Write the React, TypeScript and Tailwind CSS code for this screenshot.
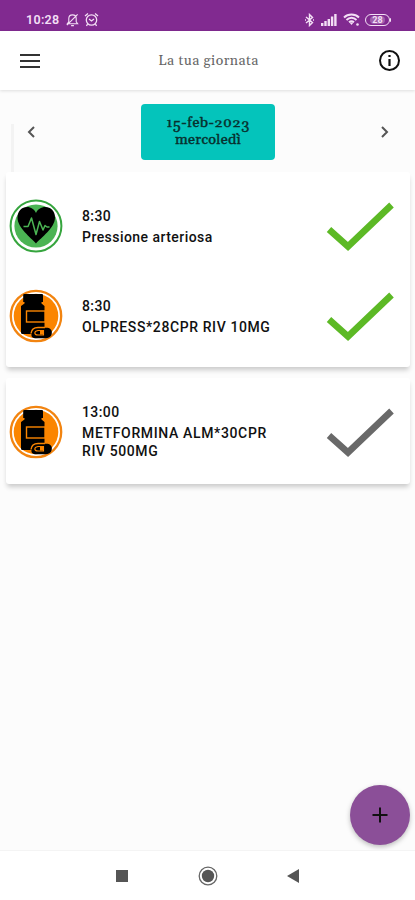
import React from "react";

function HeartIcon() {
  return (
    <svg width="54" height="54" viewBox="0 0 54 54" className="block shrink-0">
      <circle cx="27" cy="27" r="25.4" fill="#fff" stroke="#36a53e" strokeWidth="2" />
      <circle cx="27" cy="27" r="21.6" fill="#4bb453" />
      <path d="M27 44.5C22 38.500 8.500 29 8.500 18.500C8.500 12 13 8 18 8C22 8 25.500 10.500 27 14C28.500 10.500 32 8 36.500 8C41.500 8 46 12 46 18.500C46 29 32 38.500 27 44.500Z" fill="#000" />
      <path d="M14.500 27.500H19L22.500 19L27 35.500L30.500 22.500L34 31L36 26.500L38 28H40.500" fill="none" stroke="#4bb453" strokeWidth="1.5" strokeLinejoin="round" />
    </svg>
  );
}

function MedicineIcon() {
  return (
    <svg width="54" height="54" viewBox="0 0 54 54" className="block shrink-0">
      <circle cx="27" cy="27" r="25.200" fill="#fff" stroke="#f28410" strokeWidth="2.300" />
      <circle cx="27" cy="27" r="22.300" fill="#fb8500" />
      <path d="M15.500 5H33Q34 5 34 6V13H32.500V14.500L35.500 17V45H13.500Q12 45 12 43.500V17L15.500 14.500V13H14.200V6Q14.200 5 15.500 5Z" fill="#000" />
      <rect x="17.500" y="22" width="18.500" height="11" fill="#000" stroke="#fb8500" strokeWidth="1.400" />
      <path d="M22.500 45C23 40 26 38.700 29 38.700H38.500C42 39.200 43.500 42 42.700 45C42 48 39.500 49.300 36 49.300H27C24 49.300 22 48 22.500 45Z" fill="#000" />
      <path d="M22 44.500C22.500 40 25.500 38.500 29 38.500H36" fill="none" stroke="#fb8500" strokeWidth="1.500" />
      <path d="M34.500 41.500H29Q25.800 42 25.800 44Q25.800 46 29 46H34.500Z" fill="#000" stroke="#fb8500" strokeWidth="1.100" />
      <rect x="31" y="42" width="3.500" height="3.500" fill="#fb8500" />
    </svg>
  );
}

function Check({ color }: { color: string }) {
  return (
    <svg width="70" height="52" viewBox="0 0 70 52" className="ml-auto block shrink-0">
      <path d="M3 29.500L22 46.500L65.500 5" fill="none" stroke={color} strokeWidth="6.600" />
    </svg>
  );
}

function Entry({ icon, time, lines, color, className }: { icon: React.ReactNode; time: string; lines: { text: string; className: string }[]; color: string; className: string }) {
  return (
    <div className={`flex items-center pl-[3px] pr-[14px] ${className}`}>
      {icon}
      <div className="ml-[19px] whitespace-nowrap text-[14px] font-medium leading-[18px] text-[#111]">
        <div className="mb-[3px] tracking-[0.4px]">{time}</div>
        {lines.map((line) => (
          <div key={line.text} className={line.className}>{line.text}</div>
        ))}
      </div>
      <Check color={color} />
    </div>
  );
}

function StatusBar() {
  return (
    <div className="flex h-[31px] shrink-0 items-center bg-[#812a90] pt-[8px] text-[#f3dff5]">
      <span className="ml-[26px] w-[40px] text-[12.500px] font-semibold leading-4 tracking-[0.3px]">10:28</span>
      <svg width="13" height="14" viewBox="0 0 14 15" fill="none" stroke="currentColor" strokeWidth="1.200">
        <path d="M1.500 11.500H12.500L11 9.500V6C11 3.500 9.500 2 7 2S3 3.500 3 6V9.500ZM5.500 13.500H8.500M1 13L12.500 1.500" />
      </svg>
      <svg width="15" height="15" viewBox="0 0 15 15" fill="none" stroke="currentColor" strokeWidth="1.300" className="ml-[5px]">
        <circle cx="7.500" cy="8" r="5.200" />
        <path d="M1 4L4 1.500M14 4L11 1.500M5 7L7.500 9L10 7M3.500 12L2.500 14M11.500 12L12.500 14" />
      </svg>
      <svg width="11" height="14" viewBox="0 0 11 14" fill="none" stroke="currentColor" strokeWidth="1.400" className="ml-auto">
        <path d="M2 4L8.500 9.500L5.500 12.500V1.500L8.500 4.500L2 10M1 7H2M9 7H10" />
      </svg>
      <svg width="16" height="12" viewBox="0 0 16 12" fill="currentColor" className="ml-[6px]">
        <path d="M0 9H2.400V12H0ZM3.300 7H5.700V12H3.300ZM6.600 5H9V12H6.600ZM9.900 2.500H12.300V12H9.900ZM13.200 0H15.600V12H13.200Z" />
      </svg>
      <svg width="17" height="13" viewBox="0 0 17 13" fill="none" stroke="currentColor" strokeWidth="1.900" className="ml-[6px]">
        <path d="M1 4.500C5 .5 12 .5 16 4.500M3.500 7C6.500 4 10.500 4 13.500 7M6 9.300C7.500 8 9.500 8 11 9.300" />
        <path d="M6.500 9.500H10.500L8.500 12Z" fill="currentColor" stroke="none" />
        <circle cx="14.500" cy="11.500" r="1.300" fill="currentColor" stroke="none" />
      </svg>
      <div className="ml-[5px] flex h-[12px] w-[25px] items-center justify-center rounded-full border border-[#f3dff5]">
        <span className="rounded-sm bg-[#a060ac] px-[2px] text-[9px] font-bold leading-[8px]">28</span>
      </div>
      <div className="mr-[24px] h-[4px] w-[1px] rounded-r bg-[#f3dff5]" />
    </div>
  );
}

function OldStyleDigits({ value }: { value: string }) {
  return (
    <>
      {value.split("").map((char, index) => {
        if ("012".includes(char)) {
          return <span key={index} className="inline-block origin-[50%_78%] scale-y-[0.76] leading-[13px]">{char}</span>;
        }
        if ("3459".includes(char)) {
          return <span key={index} className="inline-block translate-y-[2px] leading-[13px]">{char}</span>;
        }
        return char;
      })}
    </>
  );
}

export default function App() {
  return (
    <div className="flex h-[900px] w-[415px] flex-col overflow-hidden bg-[#fcfcfc] font-['Roboto',sans-serif]">
      <StatusBar />
      <header className="z-10 flex h-[59px] shrink-0 items-center justify-between bg-white pl-5 pr-[14px] shadow-[0_1px_3px_rgba(0,0,0,0.12)]">
        <svg width="20" height="16" viewBox="0 0 20 16" fill="none" stroke="#333" strokeWidth="2">
          <path d="M0 2H20M0 8H20M0 14H20" />
        </svg>
        <h1 className="mr-[1px] whitespace-nowrap font-['Gelasio','DejaVu_Serif_Condensed','DejaVu_Serif',serif] text-[14px] leading-5 tracking-[0.450px] text-[#666]">La tua giornata</h1>
        <svg width="23" height="23" viewBox="0 0 23 23" fill="none" stroke="#111" strokeWidth="2">
          <circle cx="11.500" cy="11.500" r="9.500" />
          <path d="M11.500 10V17M11.500 6V8" strokeWidth="2.200" />
        </svg>
      </header>
      <main className="flex min-h-0 flex-1 flex-col">
        <div className="flex h-[82px] shrink-0 items-start">
          <div className="mt-[34px] h-[48px] w-[14px] border-r-[3px] border-[#f3f3f3]" />
          <svg width="10" height="14" viewBox="0 0 10 14" fill="none" stroke="#555" strokeWidth="2" className="ml-[12px] mt-[35px]">
            <path d="M8 2L3 7L8 12" />
          </svg>
          <div className="ml-[105px] mt-[14px] flex h-[56px] w-[134px] flex-col items-center justify-center whitespace-nowrap rounded-[4px] bg-[#04c4bb] font-['Gelasio','DejaVu_Serif_Condensed','DejaVu_Serif',serif] text-[14.500px] leading-[17px] text-[#082f2d] [-webkit-text-stroke:0.400px_#082f2d]">
            <span className="tracking-[0.500px]"><OldStyleDigits value="15-feb-2023" /></span>
            <span className="tracking-[0.250px]">mercoledì</span>
          </div>
          <svg width="10" height="14" viewBox="0 0 10 14" fill="none" stroke="#555" strokeWidth="2" className="ml-[105px] mt-[35px]">
            <path d="M2 2L7 7L2 12" />
          </svg>
        </div>
        <section className="mx-[6px] mr-[5px] h-[195px] shrink-0 rounded-[3px] bg-white pt-[9px] shadow-[0_4px_5px_-1px_rgba(0,0,0,0.2)]">
          <Entry className="h-[90px]" icon={<HeartIcon />} time="8:30" lines={[{ text: "Pressione arteriosa", className: "tracking-[0.450px]" }]} color="#5cb925" />
          <Entry className="h-[90px]" icon={<MedicineIcon />} time="8:30" lines={[{ text: "OLPRESS*28CPR RIV 10MG", className: "tracking-[0.600px]" }]} color="#5cb925" />
        </section>
        <section className="mx-[6px] mr-[5px] mt-[11px] h-[106px] shrink-0 rounded-[3px] bg-white shadow-[0_4px_5px_-1px_rgba(0,0,0,0.2)]">
          <Entry className="h-[107px]" icon={<MedicineIcon />} time="13:00" lines={[{ text: "METFORMINA ALM*30CPR", className: "tracking-[0.640px]" }, { text: "RIV 500MG", className: "tracking-[0.600px]" }]} color="#696969" />
        </section>
        <div className="mb-[5px] mr-[5px] mt-auto flex size-[60px] items-center justify-center self-end rounded-full bg-[#8b4f98] shadow-[0_2px_5px_rgba(0,0,0,0.25)]">
          <svg width="16" height="16" viewBox="0 0 16 16" fill="none" stroke="#111" strokeWidth="2">
            <path d="M8 0.500V15.500M0.500 8H15.500" />
          </svg>
        </div>
      </main>
      <nav className="z-10 flex h-[50px] shrink-0 items-center border-t border-[#f4f4f4] bg-white">
        <div className="ml-[116px] size-[12px] bg-[#555]" />
        <svg width="20" height="20" viewBox="0 0 20 20" className="ml-[70px]">
          <circle cx="10" cy="10" r="8.800" fill="none" stroke="#666" strokeWidth="1.300" />
          <circle cx="10" cy="10" r="6.200" fill="#555" />
        </svg>
        <svg width="12" height="14" viewBox="0 0 12 14" className="ml-[69px]">
          <path d="M0 7L12 0V14Z" fill="#555" />
        </svg>
      </nav>
    </div>
  );
}
